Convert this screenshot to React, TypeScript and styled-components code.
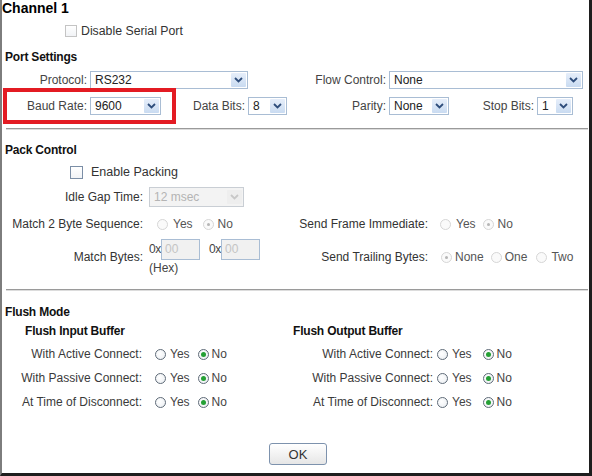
import React from "react";
import styled, { createGlobalStyle } from "styled-components";

const GlobalStyle = createGlobalStyle`
  body {
    margin: 0;
    background: #ffffff;
    font-family: "Liberation Sans", Arial, sans-serif;
  }
`;

const Frame = styled.div`
  width: 592px;
  height: 476px;
  box-sizing: border-box;
  border-left: 2px solid #7d7d7d;
  border-right: 3px solid #1e1e1e;
  border-bottom: 3px solid #1e1e1e;
  background: #ffffff;
  display: flex;
  flex-direction: column;
  overflow: hidden;
`;

const Title = styled.div`
  height: 18px;
  line-height: 16px;
  font-size: 14px;
  font-weight: bold;
  color: #000;
`;

const Row = styled.div<{ $h: number; $pl?: number; $mt?: number }>`
  display: flex;
  align-items: center;
  height: ${(p) => p.$h}px;
  padding-left: ${(p) => p.$pl ?? 0}px;
  margin-top: ${(p) => p.$mt ?? 0}px;
  flex-shrink: 0;
`;

const Heading = styled.div`
  font-size: 12px;
  font-weight: bold;
  color: #111;
  white-space: nowrap;
  letter-spacing: -0.2px;
`;

const Label = styled.span<{ $w: number; $c?: string }>`
  width: ${(p) => p.$w}px;
  flex-shrink: 0;
  text-align: right;
  font-size: 12px;
  color: ${(p) => p.$c ?? "#444"};
  white-space: nowrap;
`;

const SelectBox = styled.div<{ $w: number; $h?: number; $ml?: number; $off?: boolean }>`
  width: ${(p) => p.$w}px;
  height: ${(p) => p.$h ?? 18}px;
  margin-left: ${(p) => p.$ml ?? 3}px;
  box-sizing: border-box;
  flex-shrink: 0;
  display: flex;
  align-items: center;
  justify-content: space-between;
  border: 1px solid ${(p) => (p.$off ? "#c9ced4" : "#a9bdd4")};
  background: ${(p) => (p.$off ? "#f3f3f3" : "#ffffff")};
  padding: 0 1px 0 4px;
  font-size: 12px;
  color: ${(p) => (p.$off ? "#b4b4b4" : "#222")};
`;

const ArrowBtn = styled.span<{ $off?: boolean }>`
  width: 15px;
  height: 14px;
  display: flex;
  align-items: center;
  justify-content: center;
  background: ${(p) =>
    p.$off ? "#eeeeee" : "linear-gradient(#e6eefa, #c9dbf1)"};
  border-radius: 1px;
`;

const Highlight = styled.div`
  width: 173px;
  height: 36px;
  margin-left: 1px;
  box-sizing: border-box;
  border: 4px solid #e31b23;
  display: flex;
  align-items: center;
  flex-shrink: 0;
`;

const Separator = styled.div<{ $mt: number }>`
  margin: ${(p) => p.$mt}px 1px 0 4px;
  border-top: 1px solid #9a9a9a;
  border-bottom: 1px solid #dcdcdc;
  flex-shrink: 0;
`;

const Check = styled.span<{ $size: number; $border: string; $ml: number }>`
  width: ${(p) => p.$size}px;
  height: ${(p) => p.$size}px;
  margin-left: ${(p) => p.$ml}px;
  box-sizing: border-box;
  border: 1px solid ${(p) => p.$border};
  background: linear-gradient(#ffffff, #f1f3f6);
  flex-shrink: 0;
`;

const CheckText = styled.span<{ $ml: number; $size: number }>`
  margin-left: ${(p) => p.$ml}px;
  font-size: ${(p) => p.$size}px;
  color: #333;
  white-space: nowrap;
`;

const Half = styled.div`
  width: 288px;
  display: flex;
  align-items: center;
  flex-shrink: 0;
`;

const Opt = styled.span<{ $ml: number }>`
  display: flex;
  align-items: center;
  margin-left: ${(p) => p.$ml}px;
  flex-shrink: 0;
`;

const Circle = styled.span<{ $dim?: boolean; $on?: boolean }>`
  width: 11px;
  height: 11px;
  box-sizing: border-box;
  border-radius: 50%;
  border: 1px solid ${(p) => (p.$dim ? "#d6d6d6" : "#5f6b78")};
  background: ${(p) => (p.$dim ? "#fafafa" : "radial-gradient(circle at 40% 40%, #ffffff, #e8ecf0)")};
  display: flex;
  align-items: center;
  justify-content: center;
  &::after {
    content: "";
    display: ${(p) => (p.$on ? "block" : "none")};
    width: ${(p) => (p.$dim ? 3 : 5)}px;
    height: ${(p) => (p.$dim ? 3 : 5)}px;
    border-radius: 50%;
    background: ${(p) => (p.$dim ? "#b5b5b5" : "#25a035")};
  }
`;

const OptText = styled.span<{ $gap: number; $c?: string }>`
  margin-left: ${(p) => p.$gap}px;
  font-size: 12px;
  color: ${(p) => p.$c ?? "#444"};
  white-space: nowrap;
`;

const HexWrap = styled.div`
  display: flex;
  flex-direction: column;
  margin-left: 6px;
  font-size: 12px;
  color: #444;
`;

const HexRow = styled.div`
  display: flex;
  align-items: flex-start;
`;

const Prefix = styled.span<{ $ml: number }>`
  margin-left: ${(p) => p.$ml}px;
  width: 12px;
  padding-top: 3px;
  letter-spacing: -0.5px;
`;

const HexInput = styled.span`
  width: 39px;
  height: 21px;
  box-sizing: border-box;
  border: 1px solid #a9bdd4;
  background: #f1f1f1;
  color: #c4c4c4;
  padding: 2px 0 0 3px;
  font-size: 12px;
`;

const HexNote = styled.span`
  line-height: 14px;
  margin-top: 1px;
`;

const Column = styled.div`
  width: 288px;
  display: flex;
  flex-direction: column;
  flex-shrink: 0;
`;

const Columns = styled.div`
  display: flex;
  flex-shrink: 0;
`;

const Footer = styled.div`
  display: flex;
  justify-content: center;
  padding-left: 5px;
  margin-top: 29px;
`;

const OkButton = styled.button`
  width: 58px;
  height: 22px;
  border: 1px solid #7d92ad;
  border-radius: 3px;
  background: linear-gradient(#ffffff, #e6e6e6);
  font-family: "Liberation Sans", Arial, sans-serif;
  font-size: 13px;
  color: #333;
  padding: 0;
`;

function Chevron({ off }: { off?: boolean }) {
  return (
    <svg width="9" height="6" viewBox="0 0 9 6">
      <path
        d="M1 1 L4.5 4.5 L8 1"
        fill="none"
        stroke={off ? "#c8c8c8" : "#2e4d7b"}
        strokeWidth="1.8"
      />
    </svg>
  );
}

type SelectProps = { value: string; w: number; h?: number; ml?: number; off?: boolean };

function Select({ value, w, h, ml, off }: SelectProps) {
  return (
    <SelectBox $w={w} $h={h} $ml={ml} $off={off}>
      <span>{value}</span>
      <ArrowBtn $off={off}>
        <Chevron off={off} />
      </ArrowBtn>
    </SelectBox>
  );
}

type RadioProps = { text: string; ml: number; gap: number; on?: boolean; dim?: boolean };

function Radio({ text, ml, gap, on, dim }: RadioProps) {
  return (
    <Opt $ml={ml}>
      <Circle $on={on} $dim={dim} />
      <OptText $gap={gap} $c={dim ? "#555" : "#444"}>
        {text}
      </OptText>
    </Opt>
  );
}

function FlushRow({ label, w, yesMl, noMl }: { label: string; w: number; yesMl: number; noMl: number }) {
  return (
    <Row $h={24}>
      <Label $w={w} $c="#3a3a3a">
        {label}
      </Label>
      <Radio text="Yes" ml={yesMl} gap={4} />
      <Radio text="No" ml={noMl} gap={3} on />
    </Row>
  );
}

export default function App() {
  return (
    <>
      <GlobalStyle />
      <Frame>
        <Title>Channel 1</Title>
        <Row $h={26}>
          <Check $size={12} $border="#c4c4c4" $ml={63} />
          <CheckText $ml={4} $size={12.3}>
            Disable Serial Port
          </CheckText>
        </Row>

        <Row $h={26} $pl={3}>
          <Heading>Port Settings</Heading>
        </Row>
        <Row $h={20}>
          <Label $w={85}>Protocol:</Label>
          <Select value="RS232" w={158} />
          <Label $w={138}>Flow Control:</Label>
          <Select value="None" w={194} />
        </Row>
        <Row $h={32}>
          <Highlight>
            <Label $w={80}>Baud Rate:</Label>
            <Select value="9600" w={71} />
          </Highlight>
          <Label $w={69}>Data Bits:</Label>
          <Select value="8" w={39} />
          <Label $w={99}>Parity:</Label>
          <Select value="None" w={60} />
          <Label $w={85}>Stop Bits:</Label>
          <Select value="1" w={36} />
        </Row>
        <Separator $mt={6} />

        <Row $h={20} $pl={3} $mt={10}>
          <Heading>Pack Control</Heading>
        </Row>
        <Row $h={24}>
          <Check $size={13} $border="#7b8ea6" $ml={68} />
          <CheckText $ml={8} $size={12.5}>
            Enable Packing
          </CheckText>
        </Row>
        <Row $h={26}>
          <Label $w={141} $c="#333">
            Idle Gap Time:
          </Label>
          <Select value="12 msec" w={95} h={20} ml={6} off />
        </Row>
        <Row $h={28}>
          <Half>
            <Label $w={141} $c="#333">
              Match 2 Byte Sequence:
            </Label>
            <Radio text="Yes" ml={14} gap={5} dim />
            <Radio text="No" ml={10} gap={4} dim on />
          </Half>
          <Label $w={138} $c="#333">
            Send Frame Immediate:
          </Label>
          <Radio text="Yes" ml={12} gap={5} dim />
          <Radio text="No" ml={7} gap={4} dim on />
        </Row>
        <Row $h={38}>
          <Half>
            <Label $w={141} $c="#333">
              Match Bytes:
            </Label>
            <HexWrap>
              <HexRow>
                <Prefix $ml={0}>0x</Prefix>
                <HexInput>00</HexInput>
                <Prefix $ml={9}>0x</Prefix>
                <HexInput>00</HexInput>
              </HexRow>
              <HexNote>(Hex)</HexNote>
            </HexWrap>
          </Half>
          <Label $w={138} $c="#333">
            Send Trailing Bytes:
          </Label>
          <Radio text="None" ml={13} gap={3} dim on />
          <Radio text="One" ml={7} gap={3} dim />
          <Radio text="Two" ml={9} gap={4} dim />
        </Row>
        <Separator $mt={13} />

        <Row $h={20} $pl={3} $mt={11}>
          <Heading>Flush Mode</Heading>
        </Row>
        <Columns>
          <Column>
            <Row $h={18} $pl={23}>
              <Heading>Flush Input Buffer</Heading>
            </Row>
            <Row $h={2} />
            <FlushRow label="With Active Connect:" w={140} yesMl={13} noMl={8} />
            <FlushRow label="With Passive Connect:" w={140} yesMl={13} noMl={8} />
            <FlushRow label="At Time of Disconnect:" w={140} yesMl={13} noMl={8} />
          </Column>
          <Column>
            <Row $h={18} $pl={3}>
              <Heading>Flush Output Buffer</Heading>
            </Row>
            <Row $h={2} />
            <FlushRow label="With Active Connect:" w={143} yesMl={4} noMl={11} />
            <FlushRow label="With Passive Connect:" w={143} yesMl={4} noMl={11} />
            <FlushRow label="At Time of Disconnect:" w={143} yesMl={4} noMl={11} />
          </Column>
        </Columns>

        <Footer>
          <OkButton>OK</OkButton>
        </Footer>
      </Frame>
    </>
  );
}
